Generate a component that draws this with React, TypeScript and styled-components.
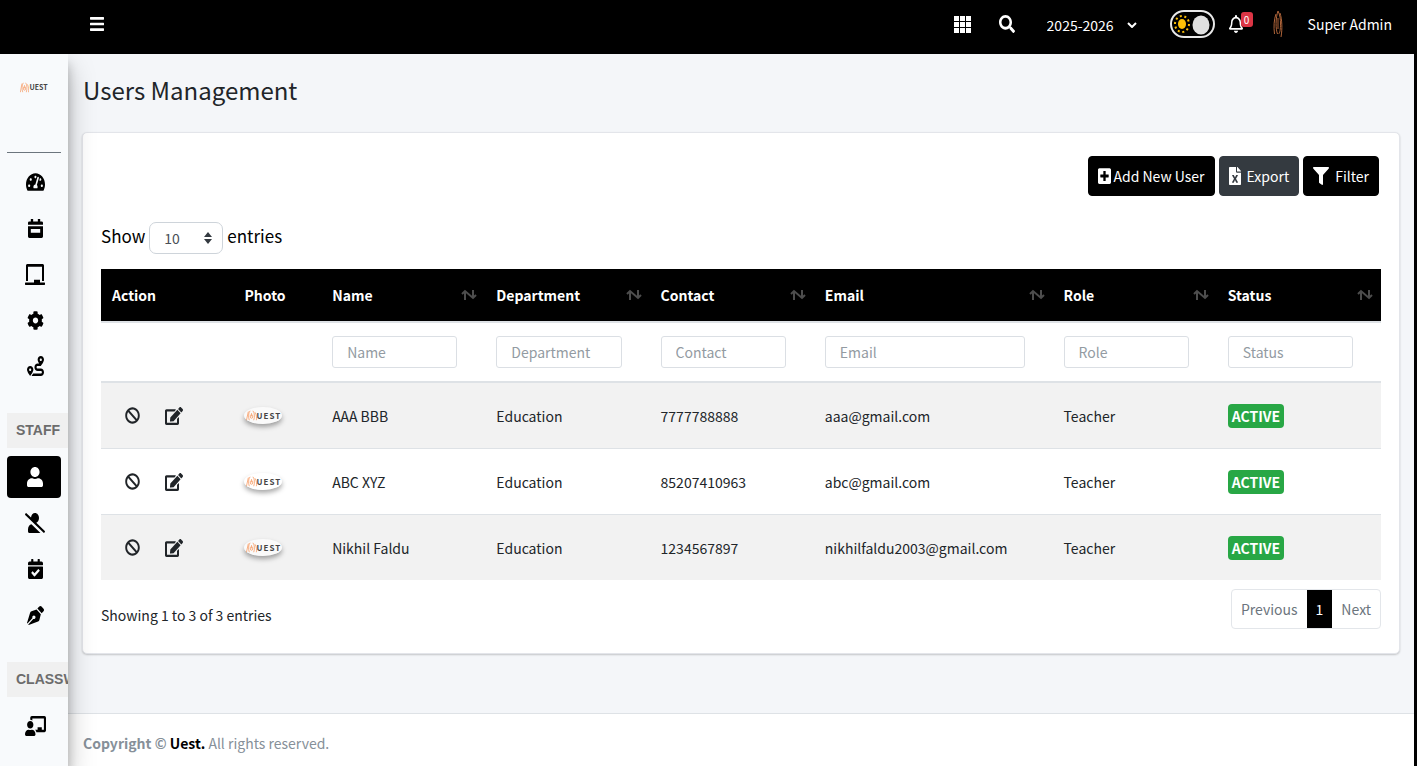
import React from "react";
import styled, { createGlobalStyle } from "styled-components";
import {
  FaBars, FaSearch, FaRegBell, FaTachometerAlt, FaChalkboard, FaCog, FaRoute, FaUser, FaUserSlash,
  FaPenNib, FaChalkboardTeacher, FaBan, FaEdit, FaPlusSquare, FaFileExcel, FaFilter, FaCalendarCheck,
} from "react-icons/fa";

const Global = createGlobalStyle`
  *, *::before, *::after { box-sizing: border-box; }
  body { margin: 0; background: #000; }
  body, button, input, select { font-family: "Noto Sans CJK SC", "Noto Sans", sans-serif; font-size: 14px; line-height: 24px; }
`;

const Page = styled.div`
  display: flex;
  flex-direction: column;
  min-height: 100vh;
  color: #212529;
`;

const TopBar = styled.header`
  position: relative;
  z-index: 2;
  display: flex;
  align-items: center;
  height: 54px;
  padding: 0 25px 6px 88px;
  background: #000;
  color: #fff;
`;

const Glyph = styled.span<{ $w: number; $h: number }>`
  display: inline-flex;
  flex: none;
  svg {
    width: ${(p) => p.$w}px;
    height: ${(p) => p.$h}px;
  }
`;

const IconButton = styled.button<{ $dark?: boolean }>`
  display: inline-flex;
  align-items: center;
  justify-content: center;
  flex: none;
  padding: 0;
  border: 0;
  background: none;
  color: ${(p) => (p.$dark ? "#212529" : "#fff")};
  width: 18px;
  height: 24px;
  cursor: pointer;
`;

const TopActions = styled.div`
  display: flex;
  align-items: center;
  margin-left: auto;
`;

const Shortcuts = styled.div`
  display: flex;
  gap: 26px;
`;

const YearPicker = styled.div`
  display: flex;
  align-items: center;
  width: 90px;
  margin: 2px 33px 0 31px;
`;

const YearSelect = styled.select`
  appearance: none;
  flex: 1;
  min-width: 0;
  padding: 0;
  border: 0;
  background: transparent;
  color: #fff;
`;

const ThemeSwitch = styled.button`
  display: flex;
  align-items: center;
  width: 45px;
  height: 28px;
  padding: 0;
  border: 2px solid #e8e8e8;
  border-radius: 14px;
  background: #000;
`;

const Alerts = styled.button`
  display: flex;
  width: 24px;
  height: 24px;
  align-items: center;
  position: relative;
  margin-left: 14px;
  padding: 0;
  border: 0;
  background: none;
  color: #fff;
`;

const Count = styled.span`
  position: absolute;
  top: 0;
  right: 0;
  width: 12px;
  height: 15px;
  border-radius: 3px;
  background: #dc3545;
  font-size: 10px;
  line-height: 15px;
  text-align: center;
`;

const Account = styled.a`
  display: flex;
  align-items: center;
  gap: 25px;
  margin-left: 20px;
  color: #fff;
  text-decoration: none;
  white-space: nowrap;
`;

const Body = styled.div`
  display: flex;
  flex: 1;
  margin-right: 3px;
`;

const Sidebar = styled.aside`
  position: relative;
  z-index: 1;
  display: flex;
  flex-direction: column;
  flex: none;
  width: 68px;
  overflow: hidden;
  background: #f8fafc;
  box-shadow: 0 14px 28px rgba(0, 0, 0, 0.25), 0 10px 10px rgba(0, 0, 0, 0.22);
`;

const Brand = styled.a`
  display: flex;
  justify-content: center;
  height: 99px;
  margin: 0 7px 8px;
  padding-top: 26px;
  border-bottom: 1px solid #6c757d;
  text-decoration: none;
`;

const Menu = styled.nav`
  display: flex;
  flex-direction: column;
  gap: 4px;
  padding: 0 7px;
`;

const MenuLink = styled.a<{ $active?: boolean }>`
  display: flex;
  align-items: center;
  justify-content: center;
  height: 42px;
  padding-left: 2px;
  border-radius: 4px;
  background: ${(p) => (p.$active ? "#000" : "transparent")};
  color: ${(p) => (p.$active ? "#fff" : "#000")};
`;

const MenuHeading = styled.h2`
  width: 100px;
  height: 35px;
  margin: 22px 0 4px;
  padding-left: 9px;
  background: #f0f0f0;
  color: #6c6c6c;
  font: 700 14px/34px "Liberation Sans", Arial, sans-serif;
`;

const Main = styled.div`
  display: flex;
  flex-direction: column;
  flex: 1;
  min-width: 0;
  background: #f4f6f9;
`;

const Title = styled.h1`
  margin: 16px 15px 22px;
  font-size: 24px;
  line-height: 40px;
  font-weight: 400;
`;

const Card = styled.section`
  margin: 0 14px 59px;
  padding: 23px 18px 24px;
  border: 1px solid #e3e5ea;
  border-radius: 5px;
  background: #fff;
  box-shadow: 0 1px 2px rgba(0, 0, 0, 0.2);
`;

const Toolbar = styled.div`
  display: flex;
  justify-content: flex-end;
  gap: 4px;
  padding-right: 2px;
`;

const ToolButton = styled.button<{ $muted?: boolean; $gap: number }>`
  display: inline-flex;
  align-items: center;
  gap: ${(p) => p.$gap}px;
  height: 40px;
  padding: 0 9px;
  border: 1px solid ${(p) => (p.$muted ? "#343a40" : "#000")};
  border-radius: 4px;
  background: ${(p) => (p.$muted ? "#343a40" : "#000")};
  color: #fff;
`;

const Length = styled.label`
  display: flex;
  align-items: center;
  gap: 4px;
  margin: 26px 0 15px;
  color: #000;
  font-size: 17px;
  line-height: 28px;
`;

const LengthText = styled.span`
  padding-bottom: 4px;
`;

const LengthBox = styled.span`
  display: flex;
  align-items: center;
  width: 74px;
  height: 32px;
  padding: 0 10px 0 14px;
  border: 1px solid #ced4da;
  border-radius: 7px;
`;

const LengthSelect = styled.select`
  appearance: none;
  flex: 1;
  padding: 0;
  border: 0;
  background: transparent;
  color: #495057;
`;

const Grid = styled.table`
  width: 100%;
  table-layout: fixed;
  border-collapse: collapse;
  text-align: left;
`;

const Col = styled.col<{ $share: number }>`
  width: ${(p) => p.$share}%;
`;

const HeadCell = styled.th`
  height: 53px;
  padding: 0 8px 0 11px;
  background: #000;
  color: #fff;
  font-weight: 700;
`;

const HeadLabel = styled.span`
  display: flex;
  align-items: center;
  justify-content: space-between;
`;

const FilterCell = styled.td`
  height: 60px;
  padding: 0 28px 0 11px;
  border-top: 2px solid #dee2e6;
  border-bottom: 2px solid #dee2e6;
`;

const FilterInput = styled.input`
  display: block;
  width: 100%;
  height: 32px;
  padding: 0 14px;
  border: 1px solid #dbdfe4;
  border-radius: 3px;
  background: #fff;
  &::placeholder { color: #939ba2; opacity: 1; }
`;

const Row = styled.tr`
  border-bottom: 1px solid #dee2e6;
  &:nth-child(odd) { background: #f2f2f2; }
  &:last-child { border-bottom: 0; }
`;

const Cell = styled.td`
  height: 66px;
  padding: 1px 11px 0;
  white-space: nowrap;
`;

const RowActions = styled.div`
  display: flex;
  gap: 24px;
  padding-left: 11px;
`;

const Status = styled.span`
  display: inline-block;
  padding: 0 4px;
  border-radius: 4px;
  background: #28a745;
  color: #fff;
  font-weight: 700;
`;

const Foot = styled.div`
  display: flex;
  align-items: flex-start;
  justify-content: space-between;
  padding-top: 9px;
`;

const Summary = styled.p`
  margin: 14px 0 0;
`;

const Pager = styled.nav`
  display: flex;
  border: 1px solid #e3e6ea;
  border-radius: 4px;
`;

const PageButton = styled.button<{ $current?: boolean }>`
  height: 38px;
  padding: 0 9px;
  border: 0;
  background: ${(p) => (p.$current ? "#000" : "transparent")};
  color: ${(p) => (p.$current ? "#fff" : "#6c757d")};
`;

const Footer = styled.footer`
  margin-top: auto;
  padding: 17px 15px 11px;
  border-top: 1px solid #dee2e6;
  background: #fff;
  color: #869099;
`;

const FooterLink = styled.a`
  color: #000;
  text-decoration: none;
`;

const Logo = styled.span`
  display: flex;
  align-items: center;
  height: 14px;
`;

const LogoText = styled.span<{ $large?: boolean }>`
  color: #444;
  font-size: ${(p) => (p.$large ? 8 : 7)}px;
  line-height: 10px;
  font-weight: 700;
  letter-spacing: ${(p) => (p.$large ? 1 : 0)}px;
`;

const Photo = styled(Logo)`
  justify-content: center;
  width: 38px;
  height: 17px;
  border-radius: 50%;
  background: rgba(255, 255, 255, 0.6);
  box-shadow: 0 3px 5px rgba(0, 0, 0, 0.35);
`;

const Wordmark = ({ large }: { large?: boolean }) => (
  <>
    <svg width={large ? 11 : 9} height="11" viewBox="0 0 14 14" preserveAspectRatio="none" fill="none" stroke="#f79a62" strokeWidth="1">
      <path d="M3 2L.600 13M5.200 1C2.800 4 2.800 9 4.200 13M5.500 6v3a1.500 1.500 0 0 0 3 0V6M7 4v4M8.800 1c2.400 3 2.400 8 1 12M11.500 3c2 3 2.200 7 1.700 10" />
    </svg>
    <LogoText $large={large}>UEST</LogoText>
  </>
);

const Avatar = () => (
  <svg width="10" height="28" viewBox="0 0 10 28" fill="none" stroke="#b0653a" strokeWidth="1">
    <path d="M3 4C1 9 .500 17 1.500 24M5 1C2.500 8 2.500 19 4.500 24M5 1c2 4 2.500 8 2.500 13s-.500 9-2 10M7 3c2 6 2.500 16 1 24M5 8v11" />
  </svg>
);

const SortIcon = () => (
  <svg width="16" height="12" viewBox="0 0 16 12" fill="none" stroke="#4d4d4d" strokeWidth="2">
    <path d="M4 11V2M1 5l3-3 8 7 3-3M12 1v8" />
  </svg>
);

type IconProps = { preserveAspectRatio?: string };

const CalendarIcon = ({ preserveAspectRatio }: IconProps) => (
  <svg viewBox="0 0 16 20" preserveAspectRatio={preserveAspectRatio} fill="currentColor" fillRule="evenodd">
    <path d="M3 0h2.500v2.500h5V0H13v2.500h1.500Q16 2.500 16 4v2H0V4q0-1.500 1.500-1.500H3zM0 7.500h16v11q0 1.500-1.500 1.500h-13Q0 20 0 18.500zM3 10.500v4h10v-4z" />
  </svg>
);

type IconType = React.ComponentType<IconProps>;

const Icon = ({ of: Shape, w, h }: { of: IconType; w: number; h: number }) => (
  <Glyph $w={w} $h={h}><Shape preserveAspectRatio="none" /></Glyph>
);

type Item = { label: string; icon: IconType; w: number; h: number; active?: boolean };

const menuTop: Item[] = [
  { label: "Dashboard", icon: FaTachometerAlt, w: 19, h: 20 },
  { label: "Calendar", icon: CalendarIcon, w: 15, h: 19 },
  { label: "Classes", icon: FaChalkboard, w: 20, h: 21 },
  { label: "Settings", icon: FaCog, w: 17, h: 19 },
  { label: "Routes", icon: FaRoute, w: 17, h: 20 },
];
const menuStaff: Item[] = [
  { label: "Users", icon: FaUser, w: 16, h: 20, active: true },
  { label: "Inactive users", icon: FaUserSlash, w: 20, h: 20 },
  { label: "Attendance", icon: FaCalendarCheck, w: 15, h: 20 },
  { label: "Notes", icon: FaPenNib, w: 17, h: 19 },
];
const menuClass: Item[] = [{ label: "Classroom", icon: FaChalkboardTeacher, w: 21, h: 20 }];

const MenuItems = ({ items }: { items: Item[] }) => (
  <>
    {items.map(({ label, icon, w, h, active }) => (
      <MenuLink key={label} href="#" aria-label={label} $active={active}>
        <Icon of={icon} w={w} h={h} />
      </MenuLink>
    ))}
  </>
);

const filters = ["Name", "Department", "Contact", "Email", "Role", "Status"];
const shares = [10.35, 6.85, 12.83, 12.83, 12.83, 18.65, 12.83, 12.83];
const users = [
  { name: "AAA BBB", contact: "7777788888", email: "aaa@gmail.com" },
  { name: "ABC XYZ", contact: "85207410963", email: "abc@gmail.com" },
  { name: "Nikhil Faldu", contact: "1234567897", email: "nikhilfaldu2003@gmail.com" },
];

export default function App() {
  return (
    <Page>
      <Global />
      <TopBar>
        <IconButton aria-label="Toggle menu"><Icon of={FaBars} w={14} h={18} /></IconButton>
        <TopActions>
          <Shortcuts>
            <IconButton aria-label="Apps">
              <svg width="17" height="17" viewBox="0 0 17 17" fill="#fff">
                {[0, 6, 12].map((y) => [0, 6, 12].map((x) => <rect key={`${x}-${y}`} x={x} y={y} width="5" height="5" />))}
              </svg>
            </IconButton>
            <IconButton aria-label="Search"><Icon of={FaSearch} w={16} h={18} /></IconButton>
          </Shortcuts>
          <YearPicker>
            <YearSelect aria-label="Academic year"><option>2025-2026</option></YearSelect>
            <svg width="10" height="6" viewBox="0 0 10 6" fill="none" stroke="#fff" strokeWidth="2"><path d="M1 1l4 4 4-4" /></svg>
          </YearPicker>
          <ThemeSwitch aria-label="Toggle theme">
            <svg width="41" height="24" viewBox="0 0 41 24">
              <ellipse cx="10" cy="12" rx="4" ry="5" fill="#ffc107" />
              <ellipse cx="10" cy="12" rx="7" ry="8" fill="none" stroke="#ffc107" strokeWidth="2" strokeDasharray="2 2.700" />
              <ellipse cx="29" cy="13" rx="8.500" ry="9.500" fill="#e0e0e0" />
            </svg>
          </ThemeSwitch>
          <Alerts aria-label="Notifications"><Icon of={FaRegBell} w={14} h={18} /><Count>0</Count></Alerts>
          <Account href="#account"><Avatar />Super Admin</Account>
        </TopActions>
      </TopBar>
      <Body>
        <Sidebar>
          <Brand href="#home" aria-label="Uest home"><Logo><Wordmark /></Logo></Brand>
          <Menu>
            <MenuItems items={menuTop} />
            <MenuHeading>STAFF</MenuHeading>
            <MenuItems items={menuStaff} />
            <MenuHeading>CLASSWORK</MenuHeading>
            <MenuItems items={menuClass} />
          </Menu>
        </Sidebar>
        <Main>
          <Title>Users Management</Title>
          <Card>
            <Toolbar>
              <ToolButton $gap={2}><Icon of={FaPlusSquare} w={13} h={18} />Add New User</ToolButton>
              <ToolButton $gap={6} $muted><Icon of={FaFileExcel} w={12} h={18} />Export</ToolButton>
              <ToolButton $gap={6}><Icon of={FaFilter} w={16} h={18} />Filter</ToolButton>
            </Toolbar>
            <Length>
              <LengthText>Show</LengthText>
              <LengthBox>
                <LengthSelect><option>10</option></LengthSelect>
                <svg width="8" height="12" viewBox="0 0 8 12" fill="#343a40"><path d="M0 5l4-5 4 5zM0 7l4 5 4-5z" /></svg>
              </LengthBox>
              <LengthText>entries</LengthText>
            </Length>
            <Grid>
              <colgroup>{shares.map((s, i) => <Col key={i} $share={s} />)}</colgroup>
              <thead>
                <tr>
                  <HeadCell>Action</HeadCell>
                  <HeadCell>Photo</HeadCell>
                  {filters.map((f) => <HeadCell key={f}><HeadLabel>{f}<SortIcon /></HeadLabel></HeadCell>)}
                </tr>
                <tr>
                  <FilterCell /><FilterCell />
                  {filters.map((f) => <FilterCell key={f}><FilterInput placeholder={f} aria-label={`Filter by ${f}`} /></FilterCell>)}
                </tr>
              </thead>
              <tbody>
                {users.map((u) => (
                  <Row key={u.name}>
                    <Cell>
                      <RowActions>
                        <IconButton $dark aria-label="Disable user"><Icon of={FaBan} w={15} h={17} /></IconButton>
                        <IconButton $dark aria-label="Edit user"><Icon of={FaEdit} w={18} h={18} /></IconButton>
                      </RowActions>
                    </Cell>
                    <Cell><Photo><Wordmark large /></Photo></Cell>
                    <Cell>{u.name}</Cell>
                    <Cell>Education</Cell>
                    <Cell>{u.contact}</Cell>
                    <Cell>{u.email}</Cell>
                    <Cell>Teacher</Cell>
                    <Cell><Status>ACTIVE</Status></Cell>
                  </Row>
                ))}
              </tbody>
            </Grid>
            <Foot>
              <Summary>Showing 1 to 3 of 3 entries</Summary>
              <Pager aria-label="Pages">
                <PageButton>Previous</PageButton>
                <PageButton $current>1</PageButton>
                <PageButton>Next</PageButton>
              </Pager>
            </Foot>
          </Card>
          <Footer><strong>Copyright © <FooterLink href="#home">Uest.</FooterLink></strong> All rights reserved.</Footer>
        </Main>
      </Body>
    </Page>
  );
}
